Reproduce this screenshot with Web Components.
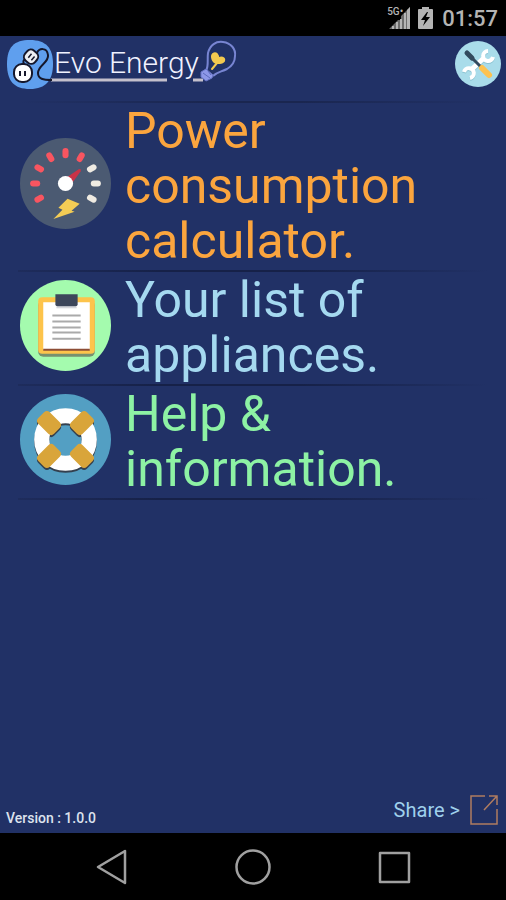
<!DOCTYPE html>
<html lang="en">
<head>
<meta charset="utf-8">
<meta name="viewport" content="width=device-width, initial-scale=1">
<title>Evo Energy</title>
<style>
    html, body {height: 100%;}
    body {margin: 0; background: #000; font-family: Roboto, "Liberation Sans", sans-serif;}
</style>
</head>
<body>
<evo-app></evo-app>
<script>
class StatusBar extends HTMLElement {
    constructor() {
        super();
        this.attachShadow({ mode: 'open' });
    }

    connectedCallback() {
        this.render();
        this.shadowRoot.querySelector('time').innerText = this.getAttribute('time');
    }

    render() {
        this.shadowRoot.innerHTML = `
<style>
    :host {display: flex; justify-content: flex-end; align-items: center; height: 36px;
        padding-right: 8px; background: #000; color: #b4b4b4;}
    .signal {display: grid; margin-right: 8px;}
    .signal svg, .signal span {grid-area: 1 / 1;}
    .signal span {font-size: 10px; line-height: 10px; font-weight: 500;}
    .battery {margin-right: 9px;}
    time {font-size: 22px; line-height: 36px; padding-top: 2px; font-weight: 500;}
</style>
<div class="signal">
    <svg width="23" height="22" viewBox="0 0 23 22" fill="#b4b4b4" aria-hidden="true">
        <path d="M23 0V22H2L11 13H14V9Z" opacity=".6"/>
        <path d="M5 19h2v3H5zM9 15h2v7H9zM13 12h2v10h-2zM17 6h2v16h-2zM20 3l3-3v22h-3z"/>
    </svg>
    <span>5G•</span>
</div>
<svg class="battery" width="15" height="22" viewBox="0 0 15 22" aria-hidden="true">
    <path d="M4 0h7v2h3q1 0 1 1v18q0 1-1 1H1q-1 0-1-1V3q0-1 1-1h3z" fill="#b4b4b4"/>
    <path d="M9 5L3 13h4l-2 6 7-9H8l2-5z" fill="#000"/>
</svg>
<time></time>`
    }
}
window.customElements.define('status-bar', StatusBar);

class EvoLogo extends HTMLElement {
    constructor() {
        super();
        this.attachShadow({ mode: 'open' });
    }

    connectedCallback() {
        this.render();
    }

    render() {
        this.shadowRoot.innerHTML = `
<style>
    :host {display: grid; width: 230px;}
    svg, h1 {grid-area: 1 / 1;}
    h1 {margin: 0; padding-left: 47px; font-size: 30px; line-height: 54px; font-weight: 300;
        color: #f0f2ff; white-space: nowrap;}
</style>
<svg width="230" height="56" viewBox="0 0 230 56" fill="none" aria-hidden="true">
    <path d="M23 4C39 4 46 12 46 28S39 53 23 53 0 45 0 28 7 4 23 4Z" fill="#5f9fee"/>
    <path d="M44 44H160M186 44H196" stroke="#c4c0cc" stroke-width="3"/>
    <path d="M30 17C32 12 40 11 41 19C42 27 31 29 31 37C31 43 36 44 45 44" stroke="#15172b" stroke-width="2"/>
    <path d="M17 28Q15 24 19 23" stroke="#15172b" stroke-width="2"/>
    <g transform="rotate(40 24 20)">
        <rect x="18" y="14" width="13" height="13" rx="5" fill="#eceef2" stroke="#15172b" stroke-width="2"/>
        <path d="M23 18v5M27 18v5" stroke="#15172b" stroke-width="1.500"/>
    </g>
    <rect x="7" y="28" width="18" height="18" rx="8" fill="#fff" stroke="#15172b" stroke-width="2"/>
    <path d="M13 35v5M18 35v5" stroke="#15172b" stroke-width="2"/>
    <path d="M199 35C202 29 200 24 201 17C203 9 209 5 216 6C224 7 229 13 228 20C228 26 225 30 220 33C214 36 210 36 206 40" stroke="#7885d2" stroke-width="2"/>
    <path d="M194 36L199 33 206 39 205 42 199 45 194 41Z" fill="#8d98e8" stroke="#6875c5"/>
    <path d="M196 37l7 5M201 35l3 4" stroke="#5c6abc"/>
    <path d="M205 33L210 27C205 26 204 20 206 18C209 16 212 19 211 23C214 20 218 22 217 25C216 27 213 27 210 27" fill="#f3c94f" stroke="#f3c94f" stroke-width="2" stroke-linecap="round" stroke-linejoin="round"/>
</svg>
<h1>Evo Energy</h1>`
    }
}
window.customElements.define('evo-logo', EvoLogo);

class ToolsButton extends HTMLElement {
    constructor() {
        super();
        this.attachShadow({ mode: 'open' });
    }

    connectedCallback() {
        this.render();
    }

    render() {
        this.shadowRoot.innerHTML = `
<style>
    :host {display: block;}
    button {display: block; padding: 0; border: 0; background: none; cursor: pointer;}
    svg {display: block;}
</style>
<button type="button" aria-label="Settings">
    <svg width="46" height="46" viewBox="0 0 46 46" fill="none">
        <circle cx="23" cy="23" r="23" fill="#a9dcea"/>
        <g stroke="#8cc3d2" stroke-width="4" transform="translate(0 1)">
            <path d="M17 28L29 17" stroke-width="5"/>
            <path d="M9 31A5 5 0 1 1 15 37"/>
            <path d="M33 10A5 5 0 1 0 38 16"/>
        </g>
        <path d="M12 12L17 17" stroke="#324a5e" stroke-width="5" stroke-linecap="round"/>
        <g stroke="#fff" stroke-width="4">
            <path d="M17 28L29 17" stroke-width="5"/>
            <path d="M9 31A5 5 0 1 1 15 37"/>
            <path d="M33 10A5 5 0 1 0 38 16"/>
        </g>
        <path d="M17 17L26 26" stroke="#324a5e" stroke-width="3"/>
        <path d="M27 27L34 34" stroke="#fdc24f" stroke-width="6" stroke-linecap="round"/>
    </svg>
</button>`
    }
}
window.customElements.define('tools-button', ToolsButton);

class MenuRow extends HTMLElement {
    constructor() {
        super();
        this.attachShadow({ mode: 'open' });
    }

    connectedCallback() {
        this.render();
        this.shadowRoot.querySelector('a').setAttribute('href', this.getAttribute('href'));
    }

    render() {
        this.shadowRoot.innerHTML = `
<style>
    :host {display: block;}
    a {display: flex; align-items: center; gap: 14px; padding: 0 20px; color: inherit;
        text-decoration: none; font-size: 50px; line-height: 55px;}
    .label {flex: 1; min-width: 0;}
    .line {height: 2px; margin: 1px 18px;
        background: linear-gradient(90deg, #1e2c5c, #162148 30%, #162148 60%, #213166);}
    ::slotted(svg) {display: block; flex: none; margin-bottom: 6px;}
</style>
<a>
    <slot name="icon"></slot>
    <span class="label"><slot></slot></span>
</a>
<div class="line"></div>`
    }
}
window.customElements.define('menu-row', MenuRow);

class PageFooter extends HTMLElement {
    constructor() {
        super();
        this.attachShadow({ mode: 'open' });
    }

    connectedCallback() {
        this.render();
        this.shadowRoot.querySelector('.version').innerText = 'Version : ' + this.getAttribute('version');
    }

    render() {
        this.shadowRoot.innerHTML = `
<style>
    :host {display: flex; justify-content: space-between; align-items: flex-end; padding: 0 8px 8px 6px;}
    .version {font-size: 14px; line-height: 14px; font-weight: 500; color: #dde2ee;}
    a {display: flex; align-items: center; gap: 10px; color: #9fd0ec; text-decoration: none;
        font-size: 20px; line-height: 28px;}
    svg {display: block;}
</style>
<span class="version"></span>
<a href="#share">Share &gt;
    <svg width="28" height="30" viewBox="0 0 28 30" fill="none" stroke="#b07c60" stroke-width="1.5" aria-hidden="true">
        <path d="M15 1H1V29H27V14M19 1H27V10M27 1L14 15"/>
    </svg>
</a>`
    }
}
window.customElements.define('page-footer', PageFooter);

class NavBar extends HTMLElement {
    constructor() {
        super();
        this.attachShadow({ mode: 'open' });
    }

    connectedCallback() {
        this.render();
    }

    render() {
        this.shadowRoot.innerHTML = `
<style>
    :host {display: flex; justify-content: center; height: 67px; background: #000;}
    button {flex: 0 1 141px; display: grid; place-items: center; padding: 0; border: 0; background: none;}
</style>
<button type="button" aria-label="Back">
    <svg width="36" height="36" viewBox="0 0 36 36" fill="none" stroke="#a0a0a0" stroke-width="2.5" stroke-linejoin="round">
        <path d="M4 18L31 2V34Z"/>
    </svg>
</button>
<button type="button" aria-label="Home">
    <svg width="36" height="36" viewBox="0 0 36 36" fill="none" stroke="#a0a0a0" stroke-width="2.5">
        <circle cx="18" cy="18" r="16.5"/>
    </svg>
</button>
<button type="button" aria-label="Recent apps">
    <svg width="36" height="36" viewBox="0 0 36 36" fill="none" stroke="#a0a0a0" stroke-width="2.5" stroke-linejoin="round">
        <rect x="4" y="4" width="29" height="29"/>
    </svg>
</button>`
    }
}
window.customElements.define('nav-bar', NavBar);

class EvoApp extends HTMLElement {
    constructor() {
        super();
        this.attachShadow({ mode: 'open' });
    }

    connectedCallback() {
        this.render();
    }

    render() {
        this.shadowRoot.innerHTML = `
<style>
    :host {display: flex; flex-direction: column; min-height: 100%;}
    main {flex: 1; display: flex; flex-direction: column; background: #213166;}
    header {display: flex; justify-content: space-between; align-items: flex-start; padding: 0 5px 0 7px;}
    tools-button {margin-top: 5px;}
    .line {height: 2px; margin: 9px 18px 1px;
        background: linear-gradient(90deg, #213166, #1a2650 40%, #1a2650 60%, #213166);}
    .power {color: #fba53e;}
    .list {color: #a5d9f0;}
    .help {color: #8df2a4;}
    page-footer {margin-top: auto;}
</style>
<status-bar time="01:57"></status-bar>
<main>
    <header>
        <evo-logo></evo-logo>
        <tools-button></tools-button>
    </header>
    <div class="line"></div>
    <nav>
        <menu-row class="power" href="#calculator">
            <svg slot="icon" width="91" height="91" viewBox="0 0 90 90" aria-hidden="true">
                <circle cx="45" cy="45" r="45" fill="#4b5a72"/>
                <g stroke="#f95560" stroke-width="6" stroke-linecap="round">
                    <path d="M45 13V17"/>
                    <path d="M45 13V17" transform="rotate(30 45 45)"/>
                    <path d="M45 13V17" transform="rotate(-30 45 45)"/>
                    <path d="M45 13V17" transform="rotate(-60 45 45)"/>
                    <path d="M45 13V17" transform="rotate(-90 45 45)"/>
                    <path d="M45 13V17" transform="rotate(-120 45 45)"/>
                </g>
                <g stroke="#efebe2" stroke-width="6" stroke-linecap="round">
                    <path d="M45 13V17" transform="rotate(60 45 45)"/>
                    <path d="M45 13V17" transform="rotate(90 45 45)"/>
                    <path d="M45 13V17" transform="rotate(120 45 45)"/>
                </g>
                <path d="M46 39L58 31Q61 30 60 33L52 44Z" fill="#c93347"/>
                <circle cx="45" cy="45" r="7.500" fill="#fff"/>
                <path d="M47 60L59 65 51 72 54 73 33 80 42 71 38 69Z" fill="#f3cc55"/>
            </svg>
            Power consumption calculator.
        </menu-row>
        <menu-row class="list" href="#appliances">
            <svg slot="icon" width="91" height="91" viewBox="0 0 90 90" aria-hidden="true">
                <circle cx="45" cy="45" r="45" fill="#a4fbae"/>
                <rect x="18" y="20" width="56" height="56" rx="5" fill="#77906f"/>
                <rect x="18" y="17" width="56" height="56" rx="4" fill="#fdc44b"/>
                <path d="M23 22H69V69H23Z" fill="#fff"/>
                <path d="M23 69H69" stroke="#8d4d35" stroke-width="2"/>
                <path d="M36 26H56V28H36Z" fill="#d5d7dc"/>
                <path d="M35 14H57V24Q57 26 55 26H37Q35 26 35 24Z" fill="#3d475b"/>
                <path d="M32 35H60M32 41H60M32 47H60M32 52H60M32 58H60" stroke="#aaa" stroke-width="2"/>
            </svg>
            Your list of appliances.
        </menu-row>
        <menu-row class="help" href="#help">
            <svg slot="icon" width="91" height="91" viewBox="0 0 90 90" aria-hidden="true">
                <defs>
                    <path id="band" d="M37 15Q37 11 41 11H49Q53 11 53 15V29Q53 33 49 33H41Q37 33 37 29Z"/>
                </defs>
                <circle cx="45" cy="45" r="45" fill="#539fc3"/>
                <g transform="translate(0 2)" fill="#34404f">
                    <circle cx="45" cy="45" r="23.500" fill="none" stroke="#34404f" stroke-width="15"/>
                    <use href="#band" transform="rotate(45 45 45)"/>
                    <use href="#band" transform="rotate(135 45 45)"/>
                    <use href="#band" transform="rotate(225 45 45)"/>
                    <use href="#band" transform="rotate(315 45 45)"/>
                </g>
                <circle cx="45" cy="45" r="23.500" fill="none" stroke="#fff" stroke-width="15"/>
                <g fill="#d9a53a">
                    <use href="#band" transform="rotate(45 45 45)"/>
                    <use href="#band" transform="rotate(135 45 45)"/>
                    <use href="#band" transform="rotate(225 45 45)"/>
                    <use href="#band" transform="rotate(315 45 45)"/>
                </g>
            </svg>
            Help &amp; information.
        </menu-row>
    </nav>
    <page-footer version="1.0.0"></page-footer>
</main>
<nav-bar></nav-bar>`
    }
}
window.customElements.define('evo-app', EvoApp);
</script>
</body>
</html>
